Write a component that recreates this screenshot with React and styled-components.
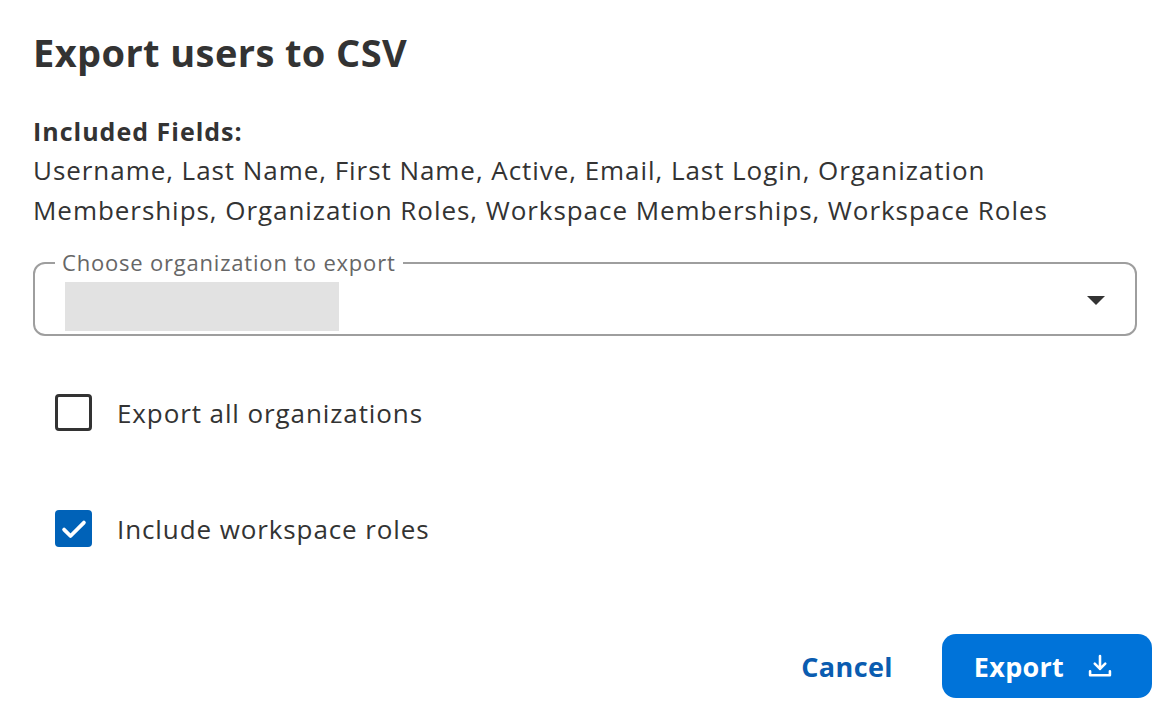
import React from "react";
import styled, { createGlobalStyle } from "styled-components";

const GlobalStyle = createGlobalStyle`
  html, body {
    margin: 0;
    padding: 0;
    background: #ffffff;
  }
  body {
    font-family: "Open Sans", "Liberation Sans", sans-serif;
    color: #333333;
  }
`;

const Dialog = styled.div`
  width: 1170px;
  height: 722px;
  box-sizing: border-box;
  padding: 24px 18px 0 33px;
  display: flex;
  flex-direction: column;
`;

const Title = styled.h1`
  margin: 0;
  font-size: 38px;
  font-weight: 700;
  line-height: 56px;
  letter-spacing: 0.4px;
  color: #333333;
`;

const FieldsHeading = styled.div`
  margin-top: 35px;
  font-size: 25px;
  font-weight: 700;
  line-height: 32px;
  letter-spacing: 1px;
  color: #333333;
`;

const FieldsList = styled.p`
  margin: 3px 0 0;
  font-size: 26px;
  line-height: 40px;
  letter-spacing: 0.95px;
  color: #333333;
  max-width: 1060px;
`;

const SelectBox = styled.div`
  position: relative;
  margin: 32px 15px 0 0;
  padding: 0 30px;
  height: 74px;
  box-sizing: border-box;
  border: 2px solid #9e9e9e;
  border-radius: 12px;
  display: flex;
  align-items: center;
  justify-content: space-between;
`;

const FloatingLabel = styled.span`
  position: absolute;
  top: -15px;
  left: 20px;
  padding: 0 7px;
  background: #ffffff;
  font-size: 22px;
  line-height: 26px;
  letter-spacing: 0.8px;
  color: #666666;
`;

const Placeholder = styled.div`
  width: 274px;
  height: 49px;
  margin-top: 14px;
  background: #e2e2e2;
`;

const Caret = styled.div`
  width: 0;
  height: 0;
  margin-top: 2px;
  border-left: 9px solid transparent;
  border-right: 9px solid transparent;
  border-top: 9px solid #333333;
`;

const Options = styled.div`
  display: flex;
  flex-direction: column;
  gap: 79px;
  margin-top: 58px;
  padding-left: 22px;
`;

const OptionRow = styled.label`
  display: flex;
  align-items: center;
  gap: 25px;
  font-size: 26px;
  line-height: 36px;
  letter-spacing: 0.9px;
  color: #333333;
`;

const Box = styled.span`
  width: 37px;
  height: 37px;
  box-sizing: border-box;
  border-radius: 4px;
  border: ${(p) => (p.$checked ? "none" : "3px solid #333333")};
  background: ${(p) => (p.$checked ? "#0062b8" : "#ffffff")};
  display: flex;
  align-items: center;
  justify-content: center;
`;

const Actions = styled.div`
  margin-top: auto;
  margin-bottom: 24px;
  display: flex;
  justify-content: flex-end;
  align-items: center;
  gap: 49px;
`;

const TextButton = styled.button`
  border: none;
  background: none;
  padding: 0;
  font-family: "Open Sans", "Liberation Sans", sans-serif;
  font-size: 27px;
  font-weight: 700;
  letter-spacing: 0.4px;
  color: #0a5cb0;
  cursor: pointer;
`;

const PrimaryButton = styled.button`
  width: 210px;
  height: 64px;
  padding: 0 6px 0 0;
  border: none;
  border-radius: 14px;
  background: #0073d9;
  color: #ffffff;
  font-family: "Open Sans", "Liberation Sans", sans-serif;
  font-size: 27px;
  font-weight: 700;
  letter-spacing: 0.3px;
  display: flex;
  align-items: center;
  justify-content: center;
  gap: 22px;
  cursor: pointer;
`;

const Check = () => (
  <svg width="28" height="28" viewBox="0 0 24 24" fill="none">
    <path d="M3.5 12.5l5.5 5.5L20.5 6.5" stroke="#ffffff" strokeWidth="3.2" strokeLinecap="round" strokeLinejoin="round" />
  </svg>
);

const DownloadIcon = () => (
  <svg width="28" height="28" viewBox="0 0 24 24" fill="none">
    <path d="M12 3.5v11M7.5 10l4.5 4.5 4.5-4.5M3.5 16.5v3.5h17v-3.5" stroke="#ffffff" strokeWidth="2.2" strokeLinecap="round" strokeLinejoin="round" />
  </svg>
);

export default function App() {
  return (
    <>
      <GlobalStyle />
      <Dialog>
        <Title>Export users to CSV</Title>
        <FieldsHeading>Included Fields:</FieldsHeading>
        <FieldsList>
          Username, Last Name, First Name, Active, Email, Last Login, Organization
          Memberships, Organization Roles, Workspace Memberships, Workspace Roles
        </FieldsList>
        <SelectBox>
          <FloatingLabel>Choose organization to export</FloatingLabel>
          <Placeholder />
          <Caret />
        </SelectBox>
        <Options>
          <OptionRow>
            <Box />
            Export all organizations
          </OptionRow>
          <OptionRow>
            <Box $checked>
              <Check />
            </Box>
            Include workspace roles
          </OptionRow>
        </Options>
        <Actions>
          <TextButton>Cancel</TextButton>
          <PrimaryButton>
            Export
            <DownloadIcon />
          </PrimaryButton>
        </Actions>
      </Dialog>
    </>
  );
}
